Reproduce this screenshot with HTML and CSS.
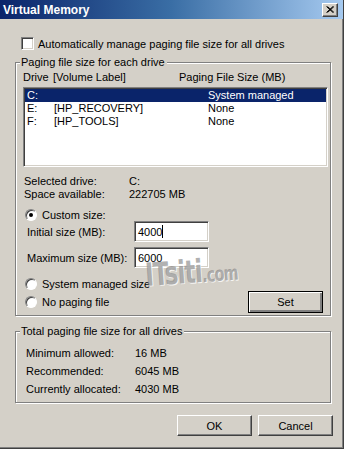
FILE: index.html
```html
<!DOCTYPE html>
<html lang="en">
<head>
    <meta charset="UTF-8">
    <meta name="viewport" content="width=device-width, initial-scale=1.0">
    <title>Virtual Memory</title>
    <link rel="stylesheet" href="styles.css">
</head>
<body>
    <div class="window">
        <div class="titlebar">
            <span class="title">Virtual Memory</span>
            <span class="close">
                <svg width="8" height="7" viewBox="0 0 8 7">
                    <path d="M0.5 0.5 L7 6.5 M1.5 0.5 L8 6.5 M7 0.5 L0.5 6.5 M8 0.5 L1.5 6.5" stroke="#000" stroke-width="1"/>
                </svg>
            </span>
        </div>

        <div class="content">
            <div class="check-row">
                <span class="checkbox"></span>
                <span>Automatically manage paging file size for all drives</span>
            </div>

            <!-- per drive settings -->
            <div class="group group-drives">
                <div class="group-title">Paging file size for each drive</div>
                <div class="list-head">
                    <span class="head-drive">Drive</span>
                    <span class="head-label">[Volume Label]</span>
                    <span>Paging File Size (MB)</span>
                </div>
                <div class="listbox">
                    <div class="list-row selected"><span>C:</span><span></span><span>System managed</span></div>
                    <div class="list-row"><span>E:</span><span>[HP_RECOVERY]</span><span>None</span></div>
                    <div class="list-row"><span>F:</span><span>[HP_TOOLS]</span><span>None</span></div>
                </div>

                <div class="info-row first"><span class="info-label">Selected drive:</span><span>C:</span></div>
                <div class="info-row"><span class="info-label">Space available:</span><span>222705 MB</span></div>

                <div class="radio-row custom">
                    <span class="radio checked"></span>
                    <span>Custom size:</span>
                </div>
                <div class="size-row">
                    <span class="size-label">Initial size (MB):</span>
                    <span class="textbox">4000<span class="caret"></span></span>
                </div>
                <div class="size-row max">
                    <span class="size-label">Maximum size (MB):</span>
                    <span class="textbox">6000</span>
                </div>
                <div class="radio-row system">
                    <span class="radio"></span>
                    <span>System managed size</span>
                </div>
                <div class="radio-row nopaging">
                    <span class="radio"></span>
                    <span>No paging file</span>
                    <button class="btn btn-default">Set</button>
                </div>
            </div>

            <!-- totals -->
            <div class="group group-total">
                <div class="group-title">Total paging file size for all drives</div>
                <div class="total-row first"><span class="total-label">Minimum allowed:</span><span>16 MB</span></div>
                <div class="total-row"><span class="total-label">Recommended:</span><span>6045 MB</span></div>
                <div class="total-row"><span class="total-label">Currently allocated:</span><span>4030 MB</span></div>
            </div>

            <div class="actions">
                <button class="btn">OK</button>
                <button class="btn">Cancel</button>
            </div>
        </div>

        <div class="watermark">ITsiti<span class="watermark-small">.com</span></div>
    </div>
</body>
</html>
```

FILE: styles.css
```css
body {
    margin: 0;
    padding: 0;
    background-color: #fff;
    font-family: "Liberation Sans", Arial, sans-serif;
    font-size: 11px;
    color: #000;
}

.window {
    position: relative;
    width: 343px;
    height: 448px;
    background-color: #d4d0c8;
    border-right: 1px solid #404040;
    border-bottom: 1px solid #404040;
    box-shadow: inset -1px -1px 0 #808080;
}

.titlebar {
    height: 19px;
    display: flex;
    align-items: center;
    justify-content: space-between;
    padding: 0 5px 0 3px;
    background: linear-gradient(to right, #0a246a, #3a6ea5 50%, #a6caf0);
}

.title {
    color: #fff;
    font-weight: bold;
    font-size: 12px;
}

.close {
    width: 16px;
    height: 14px;
    box-sizing: border-box;
    display: flex;
    align-items: center;
    justify-content: center;
    background-color: #d4d0c8;
    border: 1px solid;
    border-color: #fff #404040 #404040 #fff;
    box-shadow: inset -1px -1px 0 #808080;
}

.content {
    padding-left: 15px;
}

.check-row {
    display: flex;
    align-items: center;
    gap: 4px;
    height: 13px;
    margin: 18px 0 0 6px;
}

.checkbox {
    width: 13px;
    height: 13px;
    box-sizing: border-box;
    background-color: #fff;
    border: 1px solid;
    border-color: #808080 #fff #fff #808080;
    box-shadow: inset 1px 1px 0 #404040, inset -1px -1px 0 #d4d0c8;
}

.group {
    width: 316px;
    box-sizing: border-box;
    border: 1px solid #808080;
    box-shadow: inset 1px 1px 0 #fff, 1px 1px 0 #fff;
}

.group-drives {
    margin-top: 12px;
    padding: 0 2px 2px 7px;
}

.group-total {
    margin-top: 15px;
    padding: 0 2px 4px 10px;
}

.group-title {
    width: fit-content;
    height: 13px;
    line-height: 13px;
    margin: -7px 0 0 -3px;
    padding: 0 2px 0 1px;
    background-color: #d4d0c8;
}

.group-total .group-title {
    margin-left: -6px;
}

.list-head {
    display: flex;
    height: 13px;
    line-height: 13px;
    margin-top: 2px;
}

.head-drive {
    width: 30px;
}

.head-label {
    width: 126px;
}

.listbox {
    height: 80px;
    margin-top: 3px;
    box-sizing: border-box;
    background-color: #fff;
    border: 1px solid;
    border-color: #808080 #fff #fff #808080;
    box-shadow: inset 1px 1px 0 #404040, inset -1px -1px 0 #d4d0c8;
    padding: 1px;
}

.list-row {
    display: grid;
    grid-template-columns: 27px 154px 1fr;
    height: 13px;
    line-height: 13px;
    padding-left: 2px;
}

.list-row.selected {
    background-color: #0a246a;
    color: #fff;
}

.info-row {
    display: flex;
    height: 13px;
    line-height: 13px;
    padding-left: 1px;
}

.info-row.first {
    margin-top: 8px;
}

.info-label {
    width: 105px;
}

.radio-row {
    display: flex;
    align-items: center;
    gap: 5px;
    height: 13px;
    padding-left: 2px;
}

.radio-row.custom {
    margin-top: 7px;
}

.radio-row.system {
    margin-top: 9px;
}

.radio-row.nopaging {
    height: 22px;
    margin-top: 1px;
}

.radio {
    position: relative;
    width: 12px;
    height: 12px;
    box-sizing: border-box;
    border-radius: 50%;
    background-color: #fff;
    border: 1px solid;
    border-color: #808080 #fff #fff #808080;
    box-shadow: inset 1px 1px 0 #404040;
}

.radio.checked::after {
    content: "";
    position: absolute;
    left: 3px;
    top: 3px;
    width: 4px;
    height: 4px;
    border-radius: 50%;
    background-color: #000;
}

.size-row {
    display: flex;
    align-items: center;
    height: 21px;
    padding-left: 4px;
}

.size-row.max {
    margin-top: 5px;
}

.size-label {
    width: 107px;
}

.textbox {
    display: flex;
    align-items: center;
    width: 75px;
    height: 21px;
    box-sizing: border-box;
    padding-left: 3px;
    background-color: #fff;
    border: 1px solid;
    border-color: #808080 #fff #fff #808080;
    box-shadow: inset 1px 1px 0 #404040, inset -1px -1px 0 #d4d0c8;
}

.caret {
    width: 1px;
    height: 13px;
    background-color: #000;
}

.btn {
    width: 75px;
    height: 22px;
    box-sizing: border-box;
    padding: 0;
    font-family: inherit;
    font-size: 11px;
    color: #000;
    background-color: #d4d0c8;
    border: 1px solid;
    border-color: #fff #404040 #404040 #fff;
    box-shadow: inset -1px -1px 0 #808080;
}

.btn-default {
    margin-left: auto;
    margin-right: 5px;
    border-color: #000;
    box-shadow: inset 1px 1px 0 #fff, inset -2px -2px 0 #808080;
}

.total-row {
    display: flex;
    height: 18px;
    line-height: 18px;
}

.total-row.first {
    margin-top: 6px;
}

.total-label {
    width: 109px;
}

.actions {
    display: flex;
    justify-content: flex-end;
    gap: 6px;
    width: 318px;
    margin-top: 12px;
}

.actions .btn {
    height: 21px;
}

.watermark {
    position: absolute;
    left: 144px;
    top: 256px;
    font-family: "DejaVu Sans Condensed", "DejaVu Sans", sans-serif;
    font-weight: bold;
    font-size: 32px;
    letter-spacing: -1px;
    color: rgba(125, 125, 125, 0.6);
    text-shadow: 1px 1px 0 rgba(255, 255, 255, 0.8);
    transform: rotate(-4deg) scaleX(0.8);
    transform-origin: left top;
}

.watermark-small {
    font-size: 20px;
}
```
